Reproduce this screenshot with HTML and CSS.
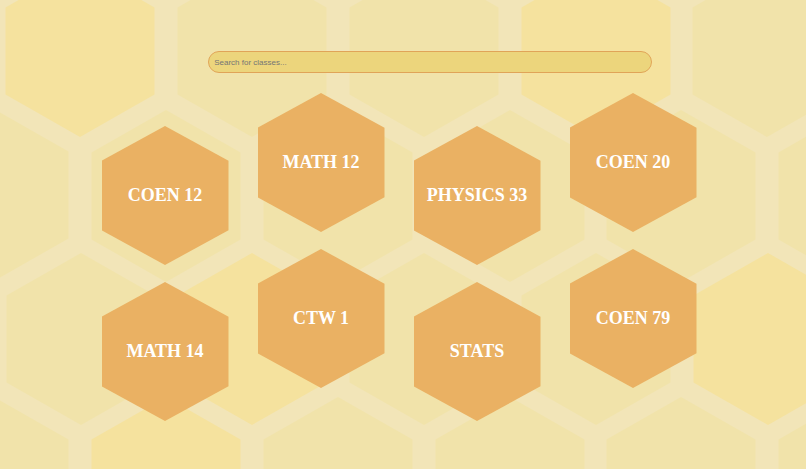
FILE: index.html
```
<!DOCTYPE html>
<html lang="en">
<head>
    <meta charset="UTF-8">
    <meta name="viewport" content="width=device-width, initial-scale=1">
    <title>Classes</title>
    <link rel="stylesheet" href="styles.css">
</head>
<body>

<svg class="honeycomb" viewBox="0 0 806 469" preserveAspectRatio="xMidYMid slice" aria-hidden="true">
    <defs>
        <path id="cell" d="M0 -86 L74.5 -43.5 V43.5 L0 86 L-74.5 43.5 V-43.5 Z"/>
    </defs>
    <g class="cells">
        <use href="#cell" x="252" y="51"/>
        <use href="#cell" x="424" y="51"/>
        <use href="#cell" x="767" y="51"/>
        <use href="#cell" x="-6" y="195"/>
        <use href="#cell" x="166" y="196"/>
        <use href="#cell" x="338" y="196"/>
        <use href="#cell" x="510" y="196"/>
        <use href="#cell" x="681" y="196"/>
        <use href="#cell" x="853" y="196"/>
        <use href="#cell" x="81" y="339"/>
        <use href="#cell" x="424" y="339"/>
        <use href="#cell" x="596" y="339"/>
        <use href="#cell" x="-6" y="483"/>
        <use href="#cell" x="338" y="483"/>
        <use href="#cell" x="510" y="483"/>
        <use href="#cell" x="681" y="483"/>
        <use href="#cell" x="853" y="483"/>
    </g>
    <g class="cells-filled">
        <use href="#cell" x="80" y="51"/>
        <use href="#cell" x="596" y="51"/>
        <use href="#cell" x="252" y="339"/>
        <use href="#cell" x="768" y="339"/>
        <use href="#cell" x="166" y="483"/>
    </g>
</svg>

<form class="search">
    <input class="search-input" type="search" placeholder="Search for classes..." aria-label="Search for classes">
</form>

<main class="classes">
    <div class="column">
        <a class="hexagon" href="#coen12">COEN 12</a>
        <a class="hexagon" href="#math14">MATH 14</a>
    </div>
    <div class="column">
        <a class="hexagon" href="#math12">MATH 12</a>
        <a class="hexagon" href="#ctw1">CTW 1</a>
    </div>
    <div class="column">
        <a class="hexagon" href="#physics33">PHYSICS 33</a>
        <a class="hexagon" href="#stats">STATS</a>
    </div>
    <div class="column">
        <a class="hexagon" href="#coen20">COEN 20</a>
        <a class="hexagon" href="#coen79">COEN 79</a>
    </div>
</main>

</body>
</html>
```
FILE: styles.css
```
* {
    box-sizing: border-box;
}

body {
    margin: 0;
    background-color: #f2e5b8;
    font-family: "Liberation Serif", "Times New Roman", serif;
}

.honeycomb {
    position: fixed;
    top: 0;
    left: 0;
    width: 100%;
    height: 100%;
    z-index: -1;
}

.cells {
    fill: #f1e3aa;
}

.cells-filled {
    fill: #f5e29e;
}

.search {
    display: flex;
    justify-content: center;
    padding-top: 51px;
    padding-left: 54px;
}

.search-input {
    width: 59%;
    height: 22px;
    margin: 0;
    padding: 0 5px;
    border: 1px solid #e0a458;
    border-radius: 11px;
    background-color: #ecd57c;
    color: #555;
    font-family: "Liberation Sans", Arial, sans-serif;
    font-size: 8px;
    appearance: none;
}

.search-input::placeholder {
    color: #757575;
}

.classes {
    display: flex;
    justify-content: center;
    gap: 29px;
    padding: 20px 8px 40px 0;
}

.column {
    display: flex;
    flex-direction: column;
    gap: 17px;
}

.column:nth-child(odd) {
    margin-top: 33px;
}

.hexagon {
    display: flex;
    align-items: center;
    justify-content: center;
    width: 127px;
    height: 139px;
    background-color: #eab163;
    clip-path: polygon(50% 0, 100% 25%, 100% 75%, 50% 100%, 0 75%, 0 25%);
    color: white;
    font-size: 18px;
    font-weight: bold;
    text-decoration: none;
}

.hexagon:hover {
    background-color: #e3a24c;
}
```
